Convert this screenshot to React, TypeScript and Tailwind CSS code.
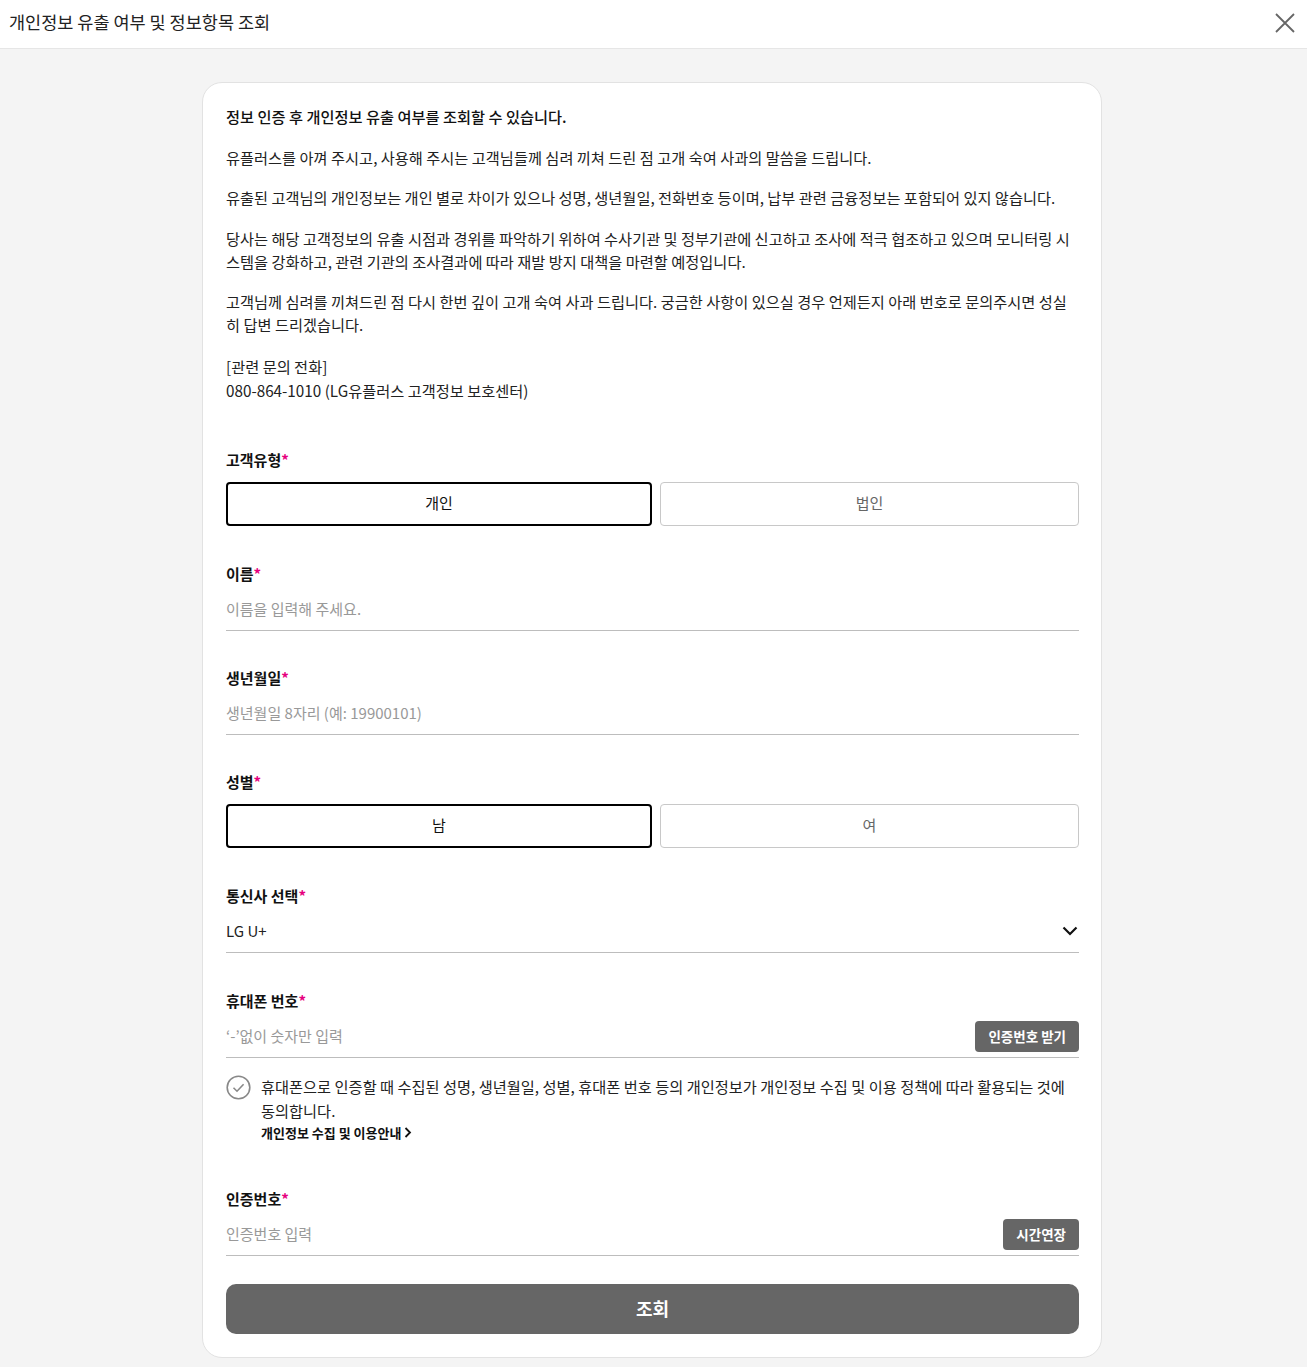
import { useState } from 'react';

const notices = [
  '유플러스를 아껴 주시고, 사용해 주시는 고객님들께 심려 끼쳐 드린 점 고개 숙여 사과의 말씀을 드립니다.',
  '유출된 고객님의 개인정보는 개인 별로 차이가 있으나 성명, 생년월일, 전화번호 등이며, 납부 관련 금융정보는 포함되어 있지 않습니다.',
  '당사는 해당 고객정보의 유출 시점과 경위를 파악하기 위하여 수사기관 및 정부기관에 신고하고 조사에 적극 협조하고 있으며 모니터링 시스템을 강화하고, 관련 기관의 조사결과에 따라 재발 방지 대책을 마련할 예정입니다.',
  '고객님께 심려를 끼쳐드린 점 다시 한번 깊이 고개 숙여 사과 드립니다. 궁금한 사항이 있으실 경우 언제든지 아래 번호로 문의주시면 성실히 답변 드리겠습니다.',
];

function Label({ children }: { children: string }) {
  return (
    <p className="text-[15px] leading-[22px] font-bold text-[#111]">
      {children}
      <span className="text-[#e6007e]">*</span>
    </p>
  );
}

function Toggle({
  options,
  value,
  onChange,
}: {
  options: string[];
  value: string;
  onChange: (v: string) => void;
}) {
  return (
    <div className="mt-[11px] grid grid-cols-[426px_1fr] gap-2">
      {options.map((o) =>
        o === value ? (
          <button
            key={o}
            onClick={() => onChange(o)}
            className="h-[44px] rounded-[4px] border-2 border-black text-[15px] text-[#111]"
          >
            {o}
          </button>
        ) : (
          <button
            key={o}
            onClick={() => onChange(o)}
            className="h-[44px] rounded-[4px] border border-[#c8c8c8] text-[15px] text-[#666]"
          >
            {o}
          </button>
        )
      )}
    </div>
  );
}

function Field({
  placeholder,
  action,
}: {
  placeholder: string;
  action?: string;
}) {
  return (
    <div className="mt-[4px] flex h-[42px] items-center border-b border-[#bdbdbd]">
      <input
        placeholder={placeholder}
        className="flex-1 bg-transparent text-[15px] text-[#222] outline-none placeholder:text-[#999]"
      />
      {action && (
        <button className="h-[31px] rounded-[4px] bg-[#666] px-[13px] text-[13.5px] font-bold text-white">
          {action}
        </button>
      )}
    </div>
  );
}

export default function App() {
  const [type, setType] = useState('개인');
  const [gender, setGender] = useState('남');

  return (
    <div className="min-h-screen bg-[#f4f4f4] font-['Noto_Sans_CJK_KR',sans-serif]">
      {/* 헤더 */}
      <header className="flex h-[49px] items-center justify-between border-b border-[#e6e6e6] bg-white pb-[4px] pl-[9px] pr-[11px]">
        <h1 className="text-[17.5px] text-[#222]">개인정보 유출 여부 및 정보항목 조회</h1>
        <button aria-label="닫기" className="mt-[2px]">
          <svg width="22" height="22" viewBox="0 0 22 22" fill="none" stroke="#666" strokeWidth="1.8">
            <path d="M2 2L20 20M20 2L2 20" />
          </svg>
        </button>
      </header>

      <div className="pt-[33px] pr-[3px] pb-[10px]">
        <div className="mx-auto w-[900px] rounded-[20px] border border-[#e2e2e2] bg-white pt-[22px] pr-[22px] pb-[23px] pl-[23px]">
          {/* 안내문 */}
          <div className="text-[15.25px] leading-[23px] text-[#222]">
            <p className="mb-[17.5px] font-medium text-[#111]">정보 인증 후 개인정보 유출 여부를 조회할 수 있습니다.</p>
            {notices.map((n) => (
              <p key={n} className="mb-[17.5px]">
                {n}
              </p>
            ))}
            <p className="leading-6">
              [관련 문의 전화]
              <br />
              080-864-1010 (LG유플러스 고객정보 보호센터)
            </p>
          </div>

          {/* 입력 폼 */}
          <div className="mt-[47px]">
            <Label>고객유형</Label>
            <Toggle options={['개인', '법인']} value={type} onChange={setType} />
          </div>

          <div className="mt-[37px]">
            <Label>이름</Label>
            <Field placeholder="이름을 입력해 주세요." />
          </div>

          <div className="mt-9">
            <Label>생년월일</Label>
            <Field placeholder="생년월일 8자리 (예: 19900101)" />
          </div>

          <div className="mt-9">
            <Label>성별</Label>
            <Toggle options={['남', '여']} value={gender} onChange={setGender} />
          </div>

          <div className="mt-[37px]">
            <Label>통신사 선택</Label>
            <div className="mt-[4px] flex h-[42px] items-center justify-between border-b border-[#bdbdbd] text-[15px] text-[#222]">
              <span>LG U+</span>
              <svg width="16" height="10" viewBox="0 0 16 10" fill="none" stroke="#111" strokeWidth="2.2" className="mr-[1px]">
                <path d="M1.5 1.5L8 8L14.5 1.5" />
              </svg>
            </div>
          </div>

          <div className="mt-[37px]">
            <Label>휴대폰 번호</Label>
            <Field placeholder="‘-’없이 숫자만 입력" action="인증번호 받기" />
          </div>

          <div className="mt-4 flex gap-[10px]">
            <svg width="25" height="25" viewBox="0 0 25 25" fill="none" stroke="#888" strokeWidth="1.6" className="mt-[1px] shrink-0">
              <circle cx="12.5" cy="12.5" r="11.3" />
              <path d="M7.5 12.8L11 16.2L17.6 9.2" />
            </svg>
            <div>
              <p className="text-[15.25px] leading-6 text-[#222]">
                휴대폰으로 인증할 때 수집된 성명, 생년월일, 성별, 휴대폰 번호 등의 개인정보가 개인정보 수집 및 이용 정책에 따라 활용되는 것에 동의합니다.
              </p>
              <a className="flex items-center gap-[3px] text-[13px] leading-[22px] font-bold text-[#111]">
                개인정보 수집 및 이용안내
                <svg width="8" height="11" viewBox="0 0 8 11" fill="none" stroke="#111" strokeWidth="1.8">
                  <path d="M1.5 1L6 5.5L1.5 10" />
                </svg>
              </a>
            </div>
          </div>

          <div className="mt-[44px]">
            <Label>인증번호</Label>
            <Field placeholder="인증번호 입력" action="시간연장" />
          </div>

          <button className="mt-[28px] h-[50px] w-full rounded-[10px] bg-[#666] text-[18px] font-bold text-white">
            조회
          </button>
        </div>
      </div>
    </div>
  );
}
